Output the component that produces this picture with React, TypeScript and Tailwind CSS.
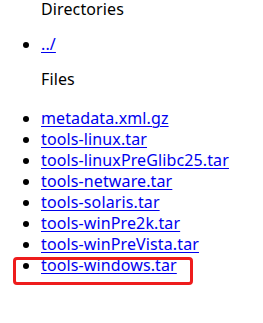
import React from "react";

const files = [
  "metadata.xml.gz",
  "tools-linux.tar",
  "tools-linuxPreGlibc25.tar",
  "tools-netware.tar",
  "tools-solaris.tar",
  "tools-winPre2k.tar",
  "tools-winPreVista.tar",
];

function Item({ name }: { name: string }) {
  return (
    <li className="h-[21px] leading-[21px]">
      <a href="#" className="text-[#0000ee] underline underline-offset-[2px] decoration-1">{name}</a>
    </li>
  );
}

export default function App() {
  return (
    <div
      className="w-[263px] h-[323px] bg-white text-black text-[16px] tracking-[0.12px] overflow-hidden"
      style={{ fontFamily: '"Noto Sans", "Noto Sans CJK SC", sans-serif' }}
    >
      <div className="pl-[41px] leading-[19px]">Directories</div>
      <ul className="list-disc pl-[41px] mt-[15px]">
        <Item name="../" />
      </ul>
      <div className="pl-[41px] mt-[14px] leading-[21px]">Files</div>
      <ul className="list-disc pl-[41px] mt-[18px]">
        {files.map((f) => (
          <Item key={f} name={f} />
        ))}
        <li className="h-[21px] leading-[21px] relative">
          <span className="absolute left-[-28px] top-[2px] w-[180px] h-[28px] border-[3px] border-[#ee1c1c] rounded-[4px]" />
          <a href="#" className="text-[#0000ee] underline underline-offset-[2px] decoration-1">tools-windows.tar</a>
        </li>
      </ul>
    </div>
  );
}
